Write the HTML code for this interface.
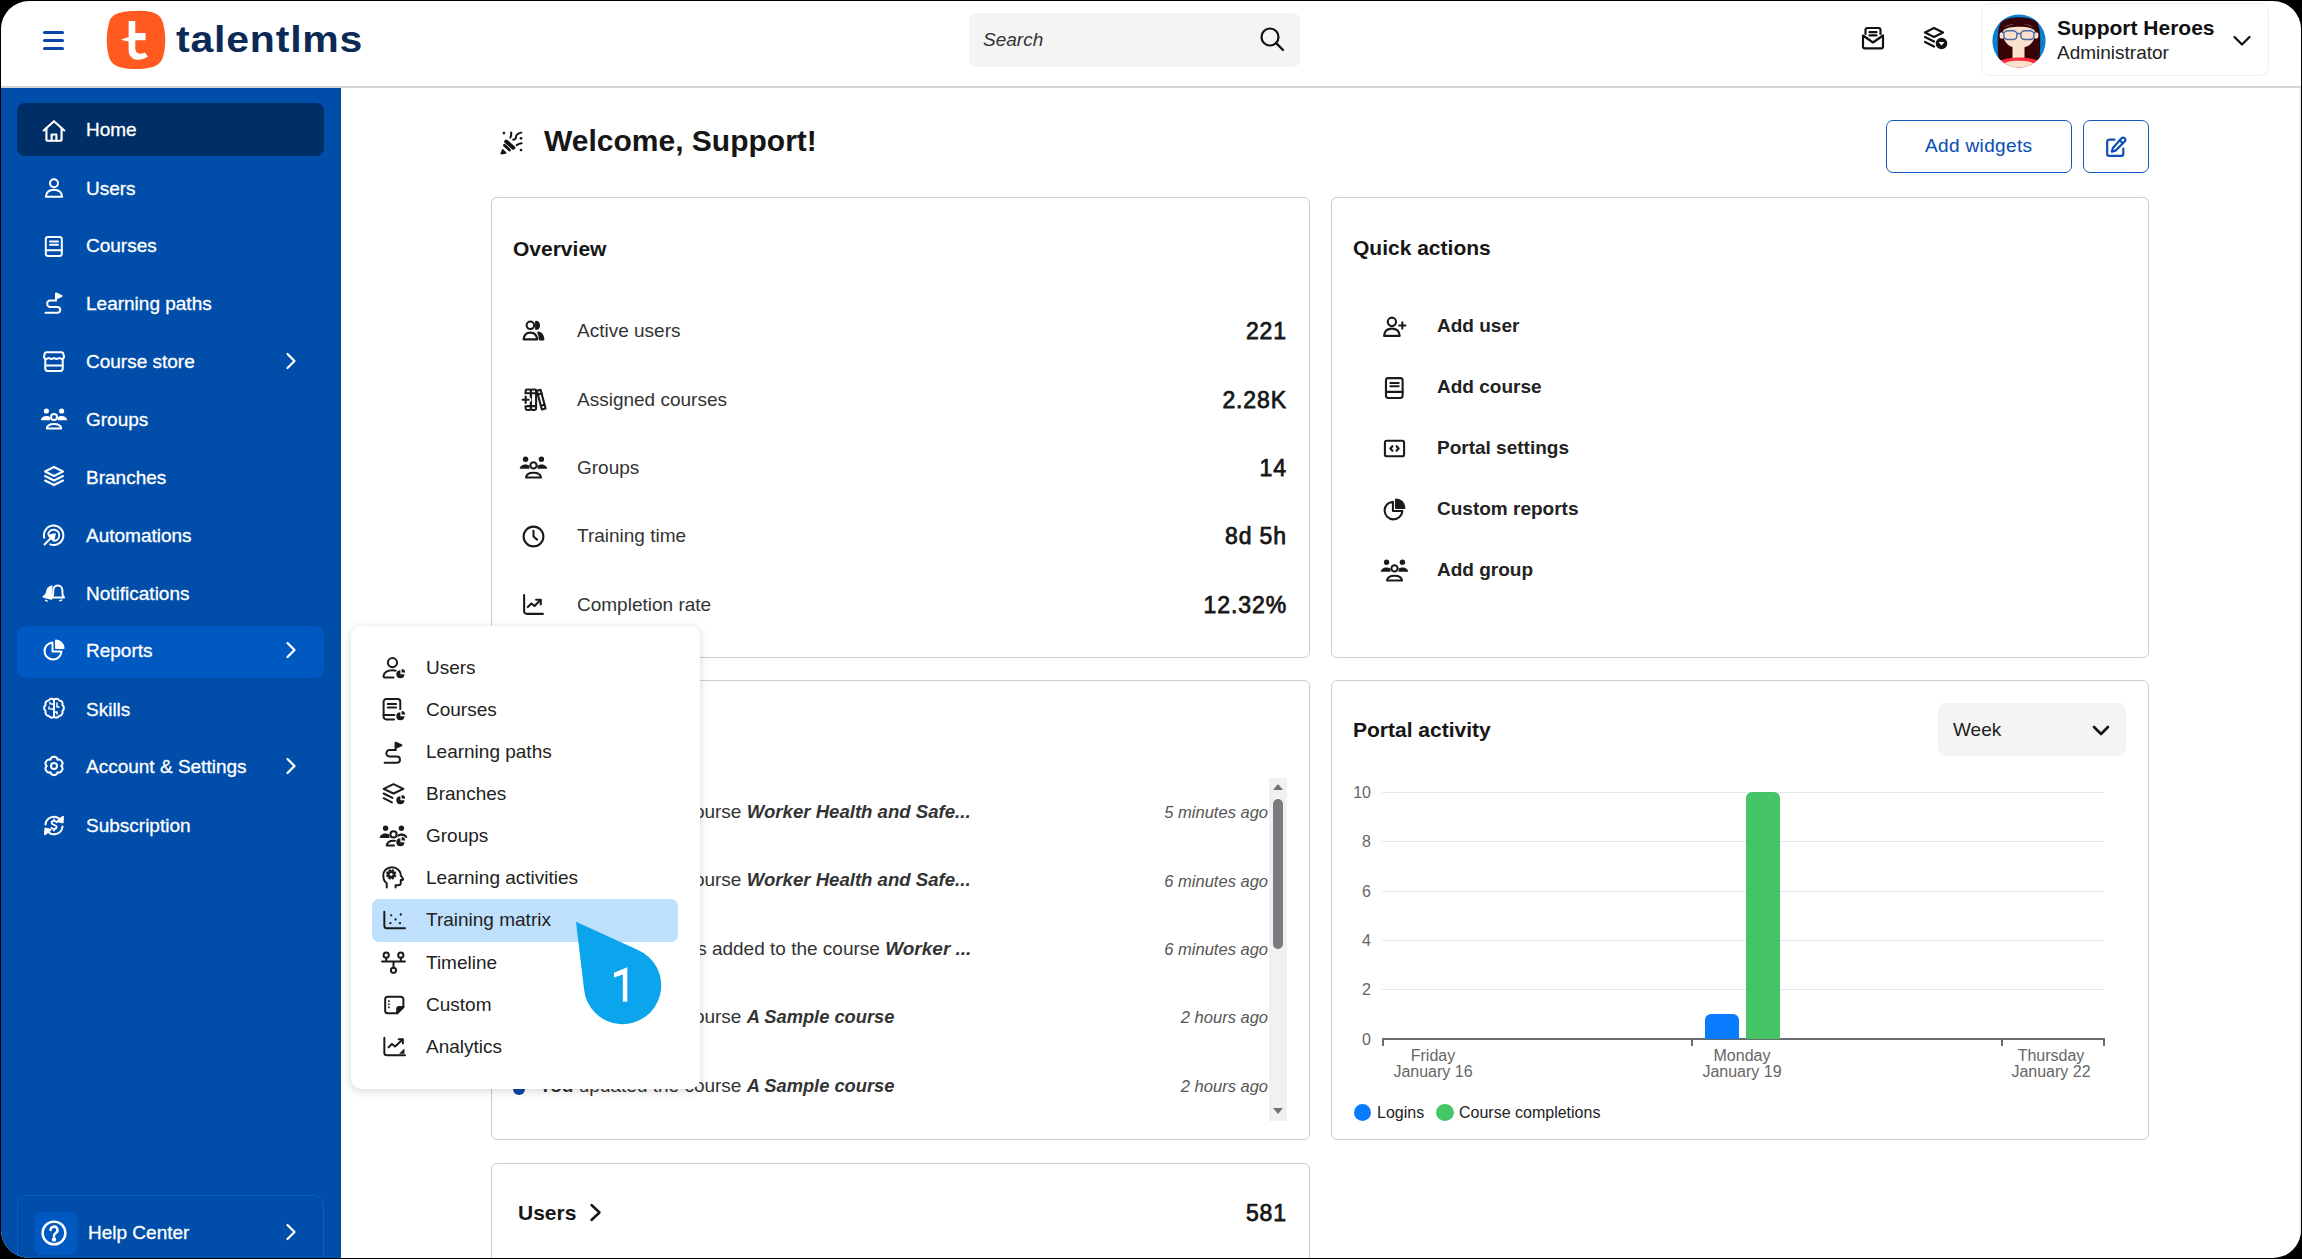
<!DOCTYPE html>
<html><head><meta charset="utf-8"><title>TalentLMS</title>
<style>
html,body{margin:0;padding:0;background:#000;width:2302px;height:1259px;overflow:hidden}
#frame{position:absolute;left:1px;top:1px;width:2300px;height:1257px;border-radius:28px;overflow:hidden;background:#fff}
#page{position:absolute;left:-1px;top:-1px;width:2302px;height:1259px}
.t{position:absolute;white-space:nowrap;font-family:'Liberation Sans', sans-serif}
svg{display:block;overflow:visible}
</style></head><body>
<div id="frame"><div id="page">
<div style="position:absolute;left:43px;top:31px;width:21px;height:3px;background:#0a47a8;border-radius:2px"></div>
<div style="position:absolute;left:43px;top:39px;width:21px;height:3px;background:#0a47a8;border-radius:2px"></div>
<div style="position:absolute;left:43px;top:47px;width:21px;height:3px;background:#0a47a8;border-radius:2px"></div>
<svg style="position:absolute;left:105px;top:9px;" width="62" height="62" viewBox="0 0 62 62"><path d="M31 2 C45 1 56 4 58 14 C61 24 61 38 58 48 C55 58 45 60 31 60 C17 60 7 58 4 48 C1 38 1 24 4 14 C6 4 17 2 31 2 Z" fill="#ff5a1f"/><path d="M23.6 12 L30.3 12 L30.3 24 L40.6 24 L40.6 31.3 L30.3 31.3 L30.3 39 C30.3 44.5 34 46 40 43.5 L42.8 47.8 C34 53.5 23.6 51 23.6 41 L23.6 32.6 C21.2 32.2 18.6 31.6 16 30.8 C18.5 29.6 21 28.8 23.6 28.2 Z" fill="#fff"/></svg>
<div class="t" style="left:176px;top:18.3px;font-size:41px;line-height:41px;font-weight:700;color:#0b2a55;font-style:normal;letter-spacing:0.8px;transform:scaleY(0.9);transform-origin:0 34.7px">talentlms</div>
<div style="position:absolute;left:969px;top:13px;width:331px;height:54px;background:#f4f4f5;border-radius:7px"></div>
<div class="t" style="left:983px;top:29.9px;font-size:19px;line-height:19px;font-weight:400;color:#333;font-style:italic;">Search</div>
<svg style="position:absolute;left:1258px;top:26px;" width="30" height="28" viewBox="0 0 30 28"><circle cx="12" cy="11" r="8.5" fill="none" stroke="#111" stroke-width="2.2"/><line x1="18.2" y1="17.2" x2="25" y2="24" stroke="#111" stroke-width="2.4" stroke-linecap="round"/></svg>
<div style="position:absolute;left:0px;top:86px;width:2302px;height:2px;background:#d3d7da"></div>
<svg style="position:absolute;left:1860px;top:25px;" width="26" height="26" viewBox="0 0 26 26"><g fill="none" stroke="#111" stroke-width="2.2" stroke-linejoin="round" stroke-linecap="round"><path d="M5.5 9 V5 a2 2 0 0 1 2-2 h11 a2 2 0 0 1 2 2 V9"/><path d="M9.5 7.2 h7 M9.5 10.4 h7"/><path d="M3 10.5 L13 17.5 L23 10.5 V21.5 a1.8 1.8 0 0 1 -1.8 1.8 H4.8 a1.8 1.8 0 0 1 -1.8 -1.8 Z"/></g></svg>
<svg style="position:absolute;left:1921px;top:25px;" width="28" height="26" viewBox="0 0 28 26"><g fill="none" stroke="#111" stroke-width="2.2" stroke-linejoin="round" stroke-linecap="round"><path d="M4 7.5 L13 3 L22 7.5 L13 12 Z"/><path d="M4 12 L13 16.5"/><path d="M4 17 L13 21.5"/></g><circle cx="20.5" cy="18.5" r="5.8" fill="#111"/><path d="M17.5 17 h6 l-3 3.6 z" fill="#fff"/></svg>
<div style="position:absolute;left:1981px;top:3px;width:288px;height:73px;border:1px solid #eeeff0;border-radius:9px;box-sizing:border-box"></div>
<svg style="position:absolute;left:1992px;top:14px;" width="54" height="54" viewBox="0 0 54 54"><defs><clipPath id="av"><circle cx="27" cy="27" r="26.6"/></clipPath></defs><g clip-path="url(#av)"><rect width="54" height="54" fill="#0b7fd4"/><path d="M6.5 46 C5.5 30 5 18 8 10 C11 1 43 1 46 10 C49 18 48.5 30 47.5 46 Z" fill="#360306"/><ellipse cx="9.8" cy="21.5" rx="2.2" ry="3.2" fill="#fbe0cc"/><ellipse cx="44.2" cy="21.5" rx="2.2" ry="3.2" fill="#fbe0cc"/><path d="M11 19 C11 11 18 10 27 10 C36 10 43 11 43 19 C43 30 35 34 27 34 C19 34 11 30 11 19 Z" fill="#fbe0cc"/><path d="M10 17.5 C12 7 42 7 44 17.5 C40 13.5 34 12.8 27 12.8 C20 12.8 14 13.5 10 17.5 Z" fill="#360306"/><rect x="20.5" y="31" width="12" height="14" fill="#fbe0cc"/><path d="M0 54 C3 47 13 43.5 27 43.5 C41 43.5 51 47 54 54 Z" fill="#ff2a3c"/><path d="M8 54 C10 48.5 17 46.8 27 46.8 C37 46.8 44 48.5 46 54 Z" fill="#fbe0cc"/><g fill="none" stroke="#4a6aa8" stroke-width="1.5"><rect x="11.8" y="16.8" width="13.2" height="8.8" rx="4"/><rect x="28.8" y="16.8" width="13.2" height="8.8" rx="4"/><path d="M25 19.5 h3.8 M11.8 19 l-1.8 -1 M42 19 l1.8 -1"/></g></g></svg>
<div class="t" style="left:2057px;top:17.2px;font-size:21px;line-height:21px;font-weight:700;color:#111;font-style:normal;">Support Heroes</div>
<div class="t" style="left:2057px;top:42.9px;font-size:19px;line-height:19px;font-weight:400;color:#222;font-style:normal;">Administrator</div>
<svg style="position:absolute;left:2232px;top:34px;" width="20" height="14" viewBox="0 0 20 14"><path d="M2.5 3 L10 10.5 L17.5 3" fill="none" stroke="#111" stroke-width="2.2" stroke-linecap="round" stroke-linejoin="round"/></svg>
<div style="position:absolute;left:0px;top:88px;width:341px;height:1171px;background:#004ea9"></div>
<div style="position:absolute;left:17px;top:103px;width:307px;height:53px;background:#002e66;border-radius:8px"></div>
<div style="position:absolute;left:17px;top:626px;width:307px;height:52px;background:#0058c1;border-radius:8px"></div>
<svg style="position:absolute;left:41px;top:118px;" width="26" height="26" viewBox="0 0 24 24"><g fill="none" stroke="#fff" color="#fff" stroke-width="2" stroke-linecap="round" stroke-linejoin="round"><path d="M2.5 11.5 L12 3 L21.5 11.5"/><path d="M5 9.5 V19.5 a1.5 1.5 0 0 0 1.5 1.5 H17.5 a1.5 1.5 0 0 0 1.5 -1.5 V9.5"/><path d="M9.8 21 V15.2 h4.4 V21"/></g></svg>
<div class="t" style="left:86px;top:119.9px;font-size:19px;line-height:19px;font-weight:400;color:#fff;font-style:normal;-webkit-text-stroke:0.3px #fff">Home</div>
<svg style="position:absolute;left:42px;top:176px;" width="24" height="24" viewBox="0 0 24 24"><g fill="none" stroke="#fff" color="#fff" stroke-width="2" stroke-linecap="round" stroke-linejoin="round"><circle cx="12" cy="7.2" r="4"/><path d="M3.8 20.8 C4.3 15.8 7.8 13.8 12 13.8 C16.2 13.8 19.7 15.8 20.2 20.8 Z"/></g></svg>
<div class="t" style="left:86px;top:178.9px;font-size:19px;line-height:19px;font-weight:400;color:#fff;font-style:normal;-webkit-text-stroke:0.3px #fff">Users</div>
<svg style="position:absolute;left:42px;top:234px;" width="24" height="24" viewBox="0 0 24 24"><g fill="none" stroke="#fff" color="#fff" stroke-width="2" stroke-linecap="round" stroke-linejoin="round"><rect x="3.8" y="3" width="16" height="19" rx="2.3"/><path d="M3.8 16.2 H19.8"/><path d="M8 7.6 h8 M8 10.8 h8"/></g></svg>
<div class="t" style="left:86px;top:235.9px;font-size:19px;line-height:19px;font-weight:400;color:#fff;font-style:normal;-webkit-text-stroke:0.3px #fff">Courses</div>
<svg style="position:absolute;left:42px;top:290px;" width="24" height="24" viewBox="0 0 24 24"><g fill="none" stroke="#fff" color="#fff" stroke-width="2" stroke-linecap="round" stroke-linejoin="round"><path d="M14 10.5 H8.3 a3.2 3.2 0 0 0 0 6.4 H15.3 a2.9 2.9 0 0 1 0 5.8 H3.5"/><path d="M14 10.5 V3.5 L19.5 6 L14 8.5 Z" fill="currentColor"/></g></svg>
<div class="t" style="left:86px;top:293.9px;font-size:19px;line-height:19px;font-weight:400;color:#fff;font-style:normal;-webkit-text-stroke:0.3px #fff">Learning paths</div>
<svg style="position:absolute;left:42px;top:349px;" width="24" height="24" viewBox="0 0 24 24"><g fill="none" stroke="#fff" color="#fff" stroke-width="2" stroke-linecap="round" stroke-linejoin="round"><path d="M4.3 3.3 H19.7 a1.6 1.6 0 0 1 1.5 1.1 L22 7.6 c0 1.4 -0.9 2.3 -2.1 2.3 c-1.3 0 -1.9 -0.9 -2.6 -0.9 c-0.7 0 -1.3 0.9 -2.7 0.9 c-1.4 0 -2 -0.9 -2.6 -0.9 c-0.6 0 -1.2 0.9 -2.6 0.9 c-1.4 0 -2 -0.9 -2.7 -0.9 c-0.7 0 -1.3 0.9 -2.6 0.9 c-1.2 0 -2.1 -0.9 -2.1 -2.3 L2.8 4.4 a1.6 1.6 0 0 1 1.5 -1.1 Z"/><path d="M3.3 10.5 V19.5 a2.5 2.5 0 0 0 2.5 2.5 H18.2 a2.5 2.5 0 0 0 2.5 -2.5 V10.5"/><path d="M3.3 16.6 H20.7"/></g></svg>
<div class="t" style="left:86px;top:351.9px;font-size:19px;line-height:19px;font-weight:400;color:#fff;font-style:normal;-webkit-text-stroke:0.3px #fff">Course store</div>
<svg style="position:absolute;left:285px;top:352px;" width="12" height="18" viewBox="0 0 12 18"><path d="M2.5 2 L9.5 9.0 L2.5 16" fill="none" stroke="#fff" stroke-width="2.2" stroke-linecap="round" stroke-linejoin="round"/></svg>
<svg style="position:absolute;left:42px;top:407px;" width="24" height="24" viewBox="0 0 24 24"><g fill="none" stroke="#fff" color="#fff" stroke-width="2" stroke-linecap="round" stroke-linejoin="round"><circle cx="12" cy="10" r="3"/><path d="M4.8 21.6 c0.3 -3 3 -4.6 7.2 -4.6 s6.9 1.6 7.2 4.6 Z"/><circle cx="4.4" cy="4" r="2.6" fill="currentColor" stroke="none"/><circle cx="19.6" cy="4" r="2.6" fill="currentColor" stroke="none"/><path d="M-1.2 13.3 C-1 10.6 1.3 9 4.3 9 C6 9 7.3 9.5 8.2 10.4 C7.9 11.3 8 12.4 8.3 13.3 Z" fill="currentColor" stroke="none"/><path d="M25.2 13.3 C25 10.6 22.7 9 19.7 9 C18 9 16.7 9.5 15.8 10.4 C16.1 11.3 16 12.4 15.7 13.3 Z" fill="currentColor" stroke="none"/></g></svg>
<div class="t" style="left:86px;top:409.9px;font-size:19px;line-height:19px;font-weight:400;color:#fff;font-style:normal;-webkit-text-stroke:0.3px #fff">Groups</div>
<svg style="position:absolute;left:42px;top:464px;" width="24" height="24" viewBox="0 0 24 24"><g fill="none" stroke="#fff" color="#fff" stroke-width="2" stroke-linecap="round" stroke-linejoin="round"><path d="M3 7.5 L12 3 L21 7.5 L12 12 Z"/><path d="M3 12 L12 16.5 L21 12"/><path d="M3 16.5 L12 21 L21 16.5"/></g></svg>
<div class="t" style="left:86px;top:467.9px;font-size:19px;line-height:19px;font-weight:400;color:#fff;font-style:normal;-webkit-text-stroke:0.3px #fff">Branches</div>
<svg style="position:absolute;left:42px;top:523px;" width="24" height="24" viewBox="0 0 24 24"><g fill="none" stroke="#fff" color="#fff" stroke-width="2" stroke-linecap="round" stroke-linejoin="round"><path d="M2.3 14.8 A9.7 9.7 0 1 1 8.3 21.4"/><path d="M6.2 11 A5.6 5.6 0 1 1 12.5 17.8"/><path d="M2.5 21.5 L9.5 14.5"/><path d="M12.8 11.2 L6.8 12.6 L11.4 17.2 Z" fill="currentColor"/></g></svg>
<div class="t" style="left:86px;top:525.9px;font-size:19px;line-height:19px;font-weight:400;color:#fff;font-style:normal;-webkit-text-stroke:0.3px #fff">Automations</div>
<svg style="position:absolute;left:42px;top:580px;" width="24" height="24" viewBox="0 0 24 24"><g fill="none" stroke="#fff" color="#fff" stroke-width="2" stroke-linecap="round" stroke-linejoin="round"><path d="M9.6 6.5 C6.8 7.2 5.2 9.6 5 12.2 C4.8 14.3 3.6 15.7 1.6 16.7 L9.4 18.7 C8.8 14.5 8.5 10 9.6 6.5 Z" fill="currentColor"/><path d="M15.8 5.5 C12.8 5.5 11.2 8 11.2 10.8 V13.8 C11.2 15.3 10.3 16.5 9.6 17.4 H22 C21.3 16.5 20.4 15.3 20.4 13.8 V10.8 C20.4 8 18.8 5.5 15.8 5.5 Z"/><path d="M3.6 20.3 l1.6 0.8 M17.6 20.8 l2.2 -0.8" stroke-width="1.4"/></g></svg>
<div class="t" style="left:86px;top:583.9px;font-size:19px;line-height:19px;font-weight:400;color:#fff;font-style:normal;-webkit-text-stroke:0.3px #fff">Notifications</div>
<svg style="position:absolute;left:42px;top:638px;" width="24" height="24" viewBox="0 0 24 24"><g fill="none" stroke="#fff" color="#fff" stroke-width="2" stroke-linecap="round" stroke-linejoin="round"><path d="M10.5 4.5 A8.5 8.5 0 1 0 19.5 13.5 H10.5 Z"/><path d="M14 2.5 A8 8 0 0 1 21.5 10 H14 Z" fill="currentColor"/></g></svg>
<div class="t" style="left:86px;top:640.9px;font-size:19px;line-height:19px;font-weight:400;color:#fff;font-style:normal;-webkit-text-stroke:0.3px #fff">Reports</div>
<svg style="position:absolute;left:285px;top:641px;" width="12" height="18" viewBox="0 0 12 18"><path d="M2.5 2 L9.5 9.0 L2.5 16" fill="none" stroke="#fff" stroke-width="2.2" stroke-linecap="round" stroke-linejoin="round"/></svg>
<svg style="position:absolute;left:42px;top:696px;" width="24" height="24" viewBox="0 0 24 24"><g fill="none" stroke="#fff" color="#fff" stroke-width="2" stroke-linecap="round" stroke-linejoin="round"><path d="M12 3.8 C10.6 2.3 7.8 2.4 6.8 4.4 C4.3 4.4 2.8 6.8 3.6 8.9 C1.6 10.3 1.6 13.6 3.6 15 C2.9 17.6 4.6 20 7 20 C8 21.9 10.8 22.2 12 20.6 Z"/><path d="M12 3.8 C13.4 2.3 16.2 2.4 17.2 4.4 C19.7 4.4 21.2 6.8 20.4 8.9 C22.4 10.3 22.4 13.6 20.4 15 C21.1 17.6 19.4 20 17 20 C16 21.9 13.2 22.2 12 20.6 Z"/><path d="M12 8 H9.5 M8 6.5 v1.5 M12 13 H8.5 M7 11 v2 M15 7 v4 h2 M12 16 h3 v2" stroke-width="1.5"/></g></svg>
<div class="t" style="left:86px;top:699.9px;font-size:19px;line-height:19px;font-weight:400;color:#fff;font-style:normal;-webkit-text-stroke:0.3px #fff">Skills</div>
<svg style="position:absolute;left:42px;top:754px;" width="24" height="24" viewBox="0 0 24 24"><g fill="none" stroke="#fff" color="#fff" stroke-width="2" stroke-linecap="round" stroke-linejoin="round"><circle cx="12" cy="12" r="3"/><path d="M8.40 5.76 C8.90 1.86 15.10 1.86 15.60 5.76 C19.23 4.25 22.33 9.62 19.20 12.00 C22.33 14.38 19.23 19.75 15.60 18.24 C15.10 22.14 8.90 22.14 8.40 18.24 C4.77 19.75 1.67 14.38 4.80 12.00 C1.67 9.62 4.77 4.25 8.40 5.76 Z"/></g></svg>
<div class="t" style="left:86px;top:756.9px;font-size:19px;line-height:19px;font-weight:400;color:#fff;font-style:normal;-webkit-text-stroke:0.3px #fff">Account &amp; Settings</div>
<svg style="position:absolute;left:285px;top:757px;" width="12" height="18" viewBox="0 0 12 18"><path d="M2.5 2 L9.5 9.0 L2.5 16" fill="none" stroke="#fff" stroke-width="2.2" stroke-linecap="round" stroke-linejoin="round"/></svg>
<svg style="position:absolute;left:42px;top:813px;" width="24" height="24" viewBox="0 0 24 24"><g fill="none" stroke="#fff" color="#fff" stroke-width="2" stroke-linecap="round" stroke-linejoin="round"><path d="M3.5 11.5 A8.5 8.5 0 0 1 18.5 6.8"/><path d="M20.5 13.5 A8.5 8.5 0 0 1 5.5 18.2"/><path d="M21 3.8 L20.6 9.4 L15.4 8.2 Z" fill="currentColor"/><path d="M3 21.2 L3.4 15.6 L8.6 16.8 Z" fill="currentColor"/><path d="M14.6 9.3 c-0.5 -0.9 -1.5 -1.4 -2.6 -1.4 c-1.4 0 -2.4 0.8 -2.4 1.9 c0 2.6 5 1.6 5 4.3 c0 1.1 -1 1.9 -2.5 1.9 c-1.1 0 -2.1 -0.5 -2.6 -1.3 M12 6.5 V7.9 M12 16 V17.5" stroke-width="1.8"/></g></svg>
<div class="t" style="left:86px;top:815.9px;font-size:19px;line-height:19px;font-weight:400;color:#fff;font-style:normal;-webkit-text-stroke:0.3px #fff">Subscription</div>
<div style="position:absolute;left:17px;top:1195px;width:307px;height:80px;border:1px solid #0c5ec6;border-radius:10px;box-sizing:border-box"></div>
<div style="position:absolute;left:34px;top:1212px;width:43px;height:43px;background:#0058c1;border-radius:7px"></div>
<svg style="position:absolute;left:41px;top:1220px;" width="26" height="26" viewBox="0 0 24 24"><g fill="none" stroke="#fff" color="#fff" stroke-width="2.3" stroke-linecap="round" stroke-linejoin="round"><circle cx="12" cy="12" r="10.5"/><path d="M8.8 9.3 a3.2 3.2 0 1 1 4.6 2.9 c-0.9 0.5 -1.4 1 -1.4 2.1 v0.6"/><circle cx="12" cy="18" r="0.9" fill="currentColor"/></g></svg>
<div class="t" style="left:88px;top:1222.9px;font-size:19px;line-height:19px;font-weight:400;color:#fff;font-style:normal;-webkit-text-stroke:0.3px #fff">Help Center</div>
<svg style="position:absolute;left:285px;top:1223px;" width="12" height="18" viewBox="0 0 12 18"><path d="M2.5 2 L9.5 9.0 L2.5 16" fill="none" stroke="#fff" stroke-width="2.2" stroke-linecap="round" stroke-linejoin="round"/></svg>
<svg style="position:absolute;left:499px;top:130px;" width="25" height="25" viewBox="0 0 25 25"><g fill="none" stroke="#111" stroke-linecap="round" stroke-linejoin="round"><circle cx="4.9" cy="3.1" r="1.3" fill="#111" stroke="none"/><circle cx="22" cy="8.3" r="1.35" fill="#111" stroke="none"/><circle cx="22" cy="20" r="1.35" fill="#111" stroke="none"/><path d="M11.4 7.6 Q12.6 5 12.2 2.4" stroke-width="2"/><path d="M14.2 9.7 C16.2 9.5 17 8.6 17 7 C17 5 18.5 3.5 22.4 2.6" stroke-width="1.9"/><path d="M17.7 15.1 C19 14.2 20.5 13.5 22.6 13.3" stroke-width="2"/><path d="M7.2 11.6 L14.3 17.7" stroke-width="4"/><path d="M5.4 15.3 L10.5 20" stroke-width="2.7"/><path d="M3.6 19.9 L6.6 22.9 L2.3 23.6 Z" fill="#111" stroke-width="1.6"/></g></svg>
<div class="t" style="left:544px;top:125.6px;font-size:30px;line-height:30px;font-weight:700;color:#161616;font-style:normal;">Welcome, Support!</div>
<div style="position:absolute;left:1886px;top:120px;width:186px;height:53px;border:1.6px solid #1558b8;border-radius:7px;box-sizing:border-box"></div>
<div class="t" style="left:1925px;top:135.9px;font-size:19px;line-height:19px;font-weight:400;color:#0c51b3;font-style:normal;letter-spacing:0.35px;-webkit-text-stroke:0.1px #0c51b3">Add widgets</div>
<div style="position:absolute;left:2083px;top:120px;width:66px;height:53px;border:1.6px solid #1558b8;border-radius:7px;box-sizing:border-box"></div>
<svg style="position:absolute;left:2103px;top:135px;" width="25" height="25" viewBox="0 0 24 24"><g fill="none" stroke="#0c51b3" color="#0c51b3" stroke-width="2.1" stroke-linecap="round" stroke-linejoin="round"><path d="M11 4.5 H6 a2 2 0 0 0 -2 2 V18 a2 2 0 0 0 2 2 H17.5 a2 2 0 0 0 2 -2 V13"/><path d="M17.8 3.2 a2.1 2.1 0 0 1 3 3 L12 15 L8.5 16 L9.5 12.5 Z"/><path d="M16 5 L19 8"/></g></svg>
<div style="position:absolute;left:491px;top:197px;width:819px;height:461px;border:1.5px solid #c9cdd1;border-radius:6px;box-sizing:border-box;background:#fff"></div>
<div class="t" style="left:513px;top:238.2px;font-size:21px;line-height:21px;font-weight:700;color:#161616;font-style:normal;">Overview</div>
<svg style="position:absolute;left:521px;top:318px;" width="25" height="25" viewBox="0 0 24 24"><g fill="none" stroke="#1a1a1a" color="#1a1a1a" stroke-width="2" stroke-linecap="round" stroke-linejoin="round"><circle cx="9" cy="7" r="3.6"/><path d="M2.5 20.5 c0.4 -4.5 3 -6.5 6.5 -6.5 s6.1 2 6.5 6.5 Z"/><path d="M14.5 3.6 a3.6 3.6 0 0 1 0 7 Z" fill="currentColor"/><path d="M16.5 14 c3 0.5 4.6 2.5 5 6.5 h-3.5 c0 -2.5 -0.5 -4.8 -1.5 -6.5 Z" fill="currentColor"/></g></svg>
<div class="t" style="left:577px;top:320.9px;font-size:19px;line-height:19px;font-weight:400;color:#333;font-style:normal;">Active users</div>
<div class="t" style="right:1015px;top:319.5px;font-size:23px;line-height:23px;font-weight:400;color:#161616;font-style:normal;letter-spacing:0.9px;-webkit-text-stroke:0.75px #161616">221</div>
<svg style="position:absolute;left:521px;top:386px;" width="25" height="25" viewBox="0 0 24 24"><g fill="none" stroke="#1a1a1a" color="#1a1a1a" stroke-width="2" stroke-linecap="round" stroke-linejoin="round"><rect x="4.5" y="3.3" width="5" height="19.7" rx="1.3"/><rect x="9.5" y="3.3" width="5" height="19.7" rx="1.3"/><path d="M4.5 7 h10 M4.5 19.3 h10"/><path d="M15.2 4.6 L18.8 3.6 L23.6 21.6 L20 22.6 Z"/><path d="M16.2 8.2 l3.6 -1 M19 19 l3.6 -1"/><path d="M1.2 13.2 h6.6 M4.5 9.9 v6.6" stroke="#fff" stroke-width="4.5"/><path d="M1.5 13.2 h6 M4.5 10.2 v6"/></g></svg>
<div class="t" style="left:577px;top:389.9px;font-size:19px;line-height:19px;font-weight:400;color:#333;font-style:normal;">Assigned courses</div>
<div class="t" style="right:1015px;top:388.5px;font-size:23px;line-height:23px;font-weight:400;color:#161616;font-style:normal;letter-spacing:0.9px;-webkit-text-stroke:0.75px #161616">2.28K</div>
<svg style="position:absolute;left:521px;top:455px;" width="25" height="25" viewBox="0 0 24 24"><g fill="none" stroke="#1a1a1a" color="#1a1a1a" stroke-width="2" stroke-linecap="round" stroke-linejoin="round"><circle cx="12" cy="10" r="3"/><path d="M4.8 21.6 c0.3 -3 3 -4.6 7.2 -4.6 s6.9 1.6 7.2 4.6 Z"/><circle cx="4.4" cy="4" r="2.6" fill="currentColor" stroke="none"/><circle cx="19.6" cy="4" r="2.6" fill="currentColor" stroke="none"/><path d="M-1.2 13.3 C-1 10.6 1.3 9 4.3 9 C6 9 7.3 9.5 8.2 10.4 C7.9 11.3 8 12.4 8.3 13.3 Z" fill="currentColor" stroke="none"/><path d="M25.2 13.3 C25 10.6 22.7 9 19.7 9 C18 9 16.7 9.5 15.8 10.4 C16.1 11.3 16 12.4 15.7 13.3 Z" fill="currentColor" stroke="none"/></g></svg>
<div class="t" style="left:577px;top:457.9px;font-size:19px;line-height:19px;font-weight:400;color:#333;font-style:normal;">Groups</div>
<div class="t" style="right:1015px;top:456.5px;font-size:23px;line-height:23px;font-weight:400;color:#161616;font-style:normal;letter-spacing:0.9px;-webkit-text-stroke:0.75px #161616">14</div>
<svg style="position:absolute;left:521px;top:524px;" width="25" height="25" viewBox="0 0 24 24"><g fill="none" stroke="#1a1a1a" color="#1a1a1a" stroke-width="2" stroke-linecap="round" stroke-linejoin="round"><circle cx="12" cy="12" r="9.5"/><path d="M12 6.5 V12 L15.5 15"/></g></svg>
<div class="t" style="left:577px;top:525.9px;font-size:19px;line-height:19px;font-weight:400;color:#333;font-style:normal;">Training time</div>
<div class="t" style="right:1015px;top:524.5px;font-size:23px;line-height:23px;font-weight:400;color:#161616;font-style:normal;letter-spacing:0.9px;-webkit-text-stroke:0.75px #161616">8d 5h</div>
<svg style="position:absolute;left:521px;top:592px;" width="25" height="25" viewBox="0 0 24 24"><g fill="none" stroke="#1a1a1a" color="#1a1a1a" stroke-width="2" stroke-linecap="round" stroke-linejoin="round"><path d="M3 3 V18.5 a2.5 2.5 0 0 0 2.5 2.5 H21"/><path d="M6.5 14.5 L10 11 L13 13.5 L18.5 8"/><path d="M14.5 7.5 h4.5 v4.5"/></g></svg>
<div class="t" style="left:577px;top:594.9px;font-size:19px;line-height:19px;font-weight:400;color:#333;font-style:normal;">Completion rate</div>
<div class="t" style="right:1015px;top:593.5px;font-size:23px;line-height:23px;font-weight:400;color:#161616;font-style:normal;letter-spacing:0.9px;-webkit-text-stroke:0.75px #161616">12.32%</div>
<div style="position:absolute;left:1331px;top:197px;width:818px;height:461px;border:1.5px solid #c9cdd1;border-radius:6px;box-sizing:border-box;background:#fff"></div>
<div class="t" style="left:1353px;top:237.2px;font-size:21px;line-height:21px;font-weight:700;color:#161616;font-style:normal;">Quick actions</div>
<svg style="position:absolute;left:1382px;top:314px;" width="25" height="25" viewBox="0 0 24 24"><g fill="none" stroke="#1a1a1a" color="#1a1a1a" stroke-width="2" stroke-linecap="round" stroke-linejoin="round"><circle cx="9.5" cy="7.5" r="4"/><path d="M2 21 c0.4 -4.8 3.3 -7 7.5 -7 s7.1 2.2 7.5 7 Z"/><path d="M19.5 8 v6 M16.5 11 h6"/></g></svg>
<div class="t" style="left:1437px;top:315.9px;font-size:19px;line-height:19px;font-weight:700;color:#222;font-style:normal;">Add user</div>
<svg style="position:absolute;left:1382px;top:375px;" width="25" height="25" viewBox="0 0 24 24"><g fill="none" stroke="#1a1a1a" color="#1a1a1a" stroke-width="2" stroke-linecap="round" stroke-linejoin="round"><rect x="3.8" y="3" width="16" height="19" rx="2.3"/><path d="M3.8 16.2 H19.8"/><path d="M8 7.6 h8 M8 10.8 h8"/></g></svg>
<div class="t" style="left:1437px;top:376.9px;font-size:19px;line-height:19px;font-weight:700;color:#222;font-style:normal;">Add course</div>
<svg style="position:absolute;left:1382px;top:436px;" width="25" height="25" viewBox="0 0 24 24"><g fill="none" stroke="#1a1a1a" color="#1a1a1a" stroke-width="2" stroke-linecap="round" stroke-linejoin="round"><rect x="2.8" y="4.5" width="18.4" height="15" rx="1.8"/><path d="M10 9.8 L8 12 L10 14.2 M14 9.8 L16 12 L14 14.2"/></g></svg>
<div class="t" style="left:1437px;top:437.9px;font-size:19px;line-height:19px;font-weight:700;color:#222;font-style:normal;">Portal settings</div>
<svg style="position:absolute;left:1382px;top:497px;" width="25" height="25" viewBox="0 0 24 24"><g fill="none" stroke="#1a1a1a" color="#1a1a1a" stroke-width="2" stroke-linecap="round" stroke-linejoin="round"><path d="M10.5 4.5 A8.5 8.5 0 1 0 19.5 13.5 H10.5 Z"/><path d="M13.5 2.5 A8 8 0 0 1 21.5 10.5 H13.5 Z" fill="currentColor"/></g></svg>
<div class="t" style="left:1437px;top:498.9px;font-size:19px;line-height:19px;font-weight:700;color:#222;font-style:normal;">Custom reports</div>
<svg style="position:absolute;left:1382px;top:558px;" width="25" height="25" viewBox="0 0 24 24"><g fill="none" stroke="#1a1a1a" color="#1a1a1a" stroke-width="2" stroke-linecap="round" stroke-linejoin="round"><circle cx="12" cy="10" r="3"/><path d="M4.8 21.6 c0.3 -3 3 -4.6 7.2 -4.6 s6.9 1.6 7.2 4.6 Z"/><circle cx="4.4" cy="4" r="2.6" fill="currentColor" stroke="none"/><circle cx="19.6" cy="4" r="2.6" fill="currentColor" stroke="none"/><path d="M-1.2 13.3 C-1 10.6 1.3 9 4.3 9 C6 9 7.3 9.5 8.2 10.4 C7.9 11.3 8 12.4 8.3 13.3 Z" fill="currentColor" stroke="none"/><path d="M25.2 13.3 C25 10.6 22.7 9 19.7 9 C18 9 16.7 9.5 15.8 10.4 C16.1 11.3 16 12.4 15.7 13.3 Z" fill="currentColor" stroke="none"/></g></svg>
<div class="t" style="left:1437px;top:559.9px;font-size:19px;line-height:19px;font-weight:700;color:#222;font-style:normal;">Add group</div>
<div style="position:absolute;left:491px;top:680px;width:819px;height:460px;border:1.5px solid #c9cdd1;border-radius:6px;box-sizing:border-box;background:#fff"></div>
<div class="t" style="left:513px;top:719.2px;font-size:21px;line-height:21px;font-weight:700;color:#161616;font-style:normal;">Activity</div>
<div style="position:absolute;left:491px;top:777px;width:780px;height:343px;overflow:hidden">
<div style="position:absolute;left:22px;top:31.9px;width:12px;height:12px;border-radius:50%;background:#0a47a8"></div>
<div class="t" style="left:48px;top:24.9px;font-size:19px;line-height:19px;color:#333"><b>You</b> updated the course <b><i style="font-size:18.6px">Worker Health and Safe...</i></b></div>
<div class="t" style="right:3px;top:26.1px;font-size:16.5px;line-height:19px;color:#555;font-style:italic">5 minutes ago</div>
<div style="position:absolute;left:22px;top:100.3px;width:12px;height:12px;border-radius:50%;background:#0a47a8"></div>
<div class="t" style="left:48px;top:93.3px;font-size:19px;line-height:19px;color:#333"><b>You</b> updated the course <b><i style="font-size:18.6px">Worker Health and Safe...</i></b></div>
<div class="t" style="right:3px;top:94.5px;font-size:16.5px;line-height:19px;color:#555;font-style:italic">6 minutes ago</div>
<div style="position:absolute;left:22px;top:168.7px;width:12px;height:12px;border-radius:50%;background:#0a47a8"></div>
<div class="t" style="left:48px;top:161.7px;font-size:19px;line-height:19px;color:#333"><span style="margin-left:42px"></span><b>John Doe</b> was added to the course <b><i>Worker ...</i></b></div>
<div class="t" style="right:3px;top:162.9px;font-size:16.5px;line-height:19px;color:#555;font-style:italic">6 minutes ago</div>
<div style="position:absolute;left:22px;top:237.1px;width:12px;height:12px;border-radius:50%;background:#0a47a8"></div>
<div class="t" style="left:48px;top:230.1px;font-size:19px;line-height:19px;color:#333"><b>You</b> updated the course <b><i style="font-size:18.3px">A Sample course</i></b></div>
<div class="t" style="right:3px;top:231.3px;font-size:16.5px;line-height:19px;color:#555;font-style:italic">2 hours ago</div>
<div style="position:absolute;left:22px;top:305.5px;width:12px;height:12px;border-radius:50%;background:#0a47a8"></div>
<div class="t" style="left:48px;top:298.5px;font-size:19px;line-height:19px;color:#333"><b>You</b> updated the course <b><i style="font-size:18.3px">A Sample course</i></b></div>
<div class="t" style="right:3px;top:299.7px;font-size:16.5px;line-height:19px;color:#555;font-style:italic">2 hours ago</div>
</div>
<div style="position:absolute;left:1269px;top:778px;width:18px;height:343px;background:#f1f1f1"></div>
<svg style="position:absolute;left:1271px;top:782px;" width="14" height="10" viewBox="0 0 14 10"><path d="M2 8 L7 2 L12 8 Z" fill="#6f7477"/></svg>
<div style="position:absolute;left:1273px;top:799px;width:10px;height:150px;background:#787c80;border-radius:5px"></div>
<svg style="position:absolute;left:1271px;top:1106px;" width="14" height="10" viewBox="0 0 14 10"><path d="M2 2 L7 8 L12 2 Z" fill="#6f7477"/></svg>
<div style="position:absolute;left:1331px;top:680px;width:818px;height:460px;border:1.5px solid #c9cdd1;border-radius:6px;box-sizing:border-box;background:#fff"></div>
<div class="t" style="left:1353px;top:719.2px;font-size:21px;line-height:21px;font-weight:700;color:#161616;font-style:normal;">Portal activity</div>
<div style="position:absolute;left:1938px;top:703px;width:188px;height:53px;background:#f4f4f5;border-radius:7px"></div>
<div class="t" style="left:1953px;top:719.9px;font-size:19px;line-height:19px;font-weight:400;color:#222;font-style:normal;">Week</div>
<svg style="position:absolute;left:2091px;top:724px;" width="20" height="14" viewBox="0 0 20 14"><path d="M3 3 L10 10 L17 3" fill="none" stroke="#111" stroke-width="2.6" stroke-linecap="round" stroke-linejoin="round"/></svg>
<div style="position:absolute;left:1382px;top:989px;width:722px;height:1px;background:#e3e8ee"></div>
<div class="t" style="right:931px;top:981.5px;font-size:16px;line-height:16px;font-weight:400;color:#666;font-style:normal;">2</div>
<div style="position:absolute;left:1382px;top:940px;width:722px;height:1px;background:#e3e8ee"></div>
<div class="t" style="right:931px;top:932.5px;font-size:16px;line-height:16px;font-weight:400;color:#666;font-style:normal;">4</div>
<div style="position:absolute;left:1382px;top:891px;width:722px;height:1px;background:#e3e8ee"></div>
<div class="t" style="right:931px;top:883.5px;font-size:16px;line-height:16px;font-weight:400;color:#666;font-style:normal;">6</div>
<div style="position:absolute;left:1382px;top:841px;width:722px;height:1px;background:#e3e8ee"></div>
<div class="t" style="right:931px;top:833.5px;font-size:16px;line-height:16px;font-weight:400;color:#666;font-style:normal;">8</div>
<div style="position:absolute;left:1382px;top:792px;width:722px;height:1px;background:#e3e8ee"></div>
<div class="t" style="right:931px;top:784.5px;font-size:16px;line-height:16px;font-weight:400;color:#666;font-style:normal;">10</div>
<div class="t" style="right:931px;top:1031.5px;font-size:16px;line-height:16px;font-weight:400;color:#666;font-style:normal;">0</div>
<div style="position:absolute;left:1382px;top:1038px;width:722px;height:2px;background:#686d72"></div>
<div style="position:absolute;left:1382px;top:1038px;width:1.5px;height:8px;background:#686d72"></div>
<div style="position:absolute;left:1691px;top:1038px;width:1.5px;height:8px;background:#686d72"></div>
<div style="position:absolute;left:2001px;top:1038px;width:1.5px;height:8px;background:#686d72"></div>
<div style="position:absolute;left:2103px;top:1038px;width:1.5px;height:8px;background:#686d72"></div>
<div style="position:absolute;left:1705px;top:1014px;width:34px;height:25px;background:#0a7cff;border-radius:6px 6px 0 0"></div>
<div style="position:absolute;left:1746px;top:792px;width:34px;height:247px;background:#46c566;border-radius:6px 6px 0 0"></div>
<div class="t" style="left:1353px;width:160px;text-align:center;top:1047.5px;font-size:16px;line-height:16px;color:#666">Friday</div>
<div class="t" style="left:1353px;width:160px;text-align:center;top:1063.5px;font-size:16px;line-height:16px;color:#666">January 16</div>
<div class="t" style="left:1662px;width:160px;text-align:center;top:1047.5px;font-size:16px;line-height:16px;color:#666">Monday</div>
<div class="t" style="left:1662px;width:160px;text-align:center;top:1063.5px;font-size:16px;line-height:16px;color:#666">January 19</div>
<div class="t" style="left:1971px;width:160px;text-align:center;top:1047.5px;font-size:16px;line-height:16px;color:#666">Thursday</div>
<div class="t" style="left:1971px;width:160px;text-align:center;top:1063.5px;font-size:16px;line-height:16px;color:#666">January 22</div>
<div style="position:absolute;left:1354px;top:1104px;width:17px;height:17px;background:#0a7cff;border-radius:50%"></div>
<div class="t" style="left:1377px;top:1104.5px;font-size:16px;line-height:16px;font-weight:400;color:#222;font-style:normal;">Logins</div>
<div style="position:absolute;left:1436px;top:1104px;width:18px;height:17px;background:#46c566;border-radius:50%"></div>
<div class="t" style="left:1459px;top:1104.5px;font-size:16px;line-height:16px;font-weight:400;color:#222;font-style:normal;">Course completions</div>
<div style="position:absolute;left:491px;top:1163px;width:819px;height:120px;border:1.5px solid #c9cdd1;border-radius:6px;box-sizing:border-box;background:#fff"></div>
<div class="t" style="left:518px;top:1202.2px;font-size:21px;line-height:21px;font-weight:700;color:#161616;font-style:normal;">Users</div>
<svg style="position:absolute;left:589px;top:1203px;" width="13" height="19" viewBox="0 0 13 19"><path d="M2.5 2 L10.5 9.5 L2.5 17" fill="none" stroke="#161616" stroke-width="2.4" stroke-linecap="round" stroke-linejoin="round"/></svg>
<div class="t" style="right:1015px;top:1201.5px;font-size:23px;line-height:23px;font-weight:400;color:#161616;font-style:normal;letter-spacing:0.9px;-webkit-text-stroke:0.75px #161616">581</div>
<div style="position:absolute;left:2299px;top:88px;width:1.5px;height:1171px;background:#efefef"></div>
<div style="position:absolute;left:351px;top:626px;width:349px;height:463px;background:#fff;border-radius:10px;box-shadow:0 2px 10px rgba(0,0,0,0.16)"></div>
<div style="position:absolute;left:372px;top:899px;width:306px;height:43px;background:#bee0fc;border-radius:7px"></div>
<svg style="position:absolute;left:381px;top:655px;" width="25" height="25" viewBox="0 0 24 24"><g fill="none" stroke="#1a1a1a" color="#1a1a1a" stroke-width="1.9" stroke-linecap="round" stroke-linejoin="round"><circle cx="11" cy="7.3" r="4.4"/><path d="M12 21.5 H3.6 c-0.8 0 -1.3 -0.6 -1.2 -1.3 C3 16.6 6.4 14.6 11 14.6 c1.4 0 2.6 0.2 3.6 0.6"/><circle cx="19.6" cy="17.8" r="5.6" fill="#fff" stroke="none"/><path d="M18.6 14.6 A3.9 3.9 0 1 0 22.5 18.5 H18.6 Z" fill="currentColor" stroke="none"/><path d="M19.8 13.4 A3.4 3.4 0 0 1 23.2 16.8 H19.8 Z" fill="currentColor" stroke="none"/></g></svg>
<div class="t" style="left:426px;top:657.9px;font-size:19px;line-height:19px;font-weight:400;color:#222;font-style:normal;">Users</div>
<svg style="position:absolute;left:381px;top:697px;" width="25" height="25" viewBox="0 0 24 24"><g fill="none" stroke="#1a1a1a" color="#1a1a1a" stroke-width="1.9" stroke-linecap="round" stroke-linejoin="round"><path d="M12.5 21.5 H5 a2.5 2.5 0 0 1 -2.5 -2.5 V4.5 a2.5 2.5 0 0 1 2.5 -2.5 H16 a2.5 2.5 0 0 1 2.5 2.5 V12"/><path d="M2.5 17.3 H13"/><path d="M6.5 6.8 h8 M6.5 10 h8"/><circle cx="19.6" cy="17.8" r="5.6" fill="#fff" stroke="none"/><path d="M18.6 14.6 A3.9 3.9 0 1 0 22.5 18.5 H18.6 Z" fill="currentColor" stroke="none"/><path d="M19.8 13.4 A3.4 3.4 0 0 1 23.2 16.8 H19.8 Z" fill="currentColor" stroke="none"/></g></svg>
<div class="t" style="left:426px;top:699.9px;font-size:19px;line-height:19px;font-weight:400;color:#222;font-style:normal;">Courses</div>
<svg style="position:absolute;left:381px;top:739px;" width="25" height="25" viewBox="0 0 24 24"><g fill="none" stroke="#1a1a1a" color="#1a1a1a" stroke-width="1.9" stroke-linecap="round" stroke-linejoin="round"><path d="M14 10.5 H8.3 a3.2 3.2 0 0 0 0 6.4 H15.3 a2.9 2.9 0 0 1 0 5.8 H3.5"/><path d="M14 10.5 V3.5 L19.5 6 L14 8.5 Z" fill="currentColor"/></g></svg>
<div class="t" style="left:426px;top:741.9px;font-size:19px;line-height:19px;font-weight:400;color:#222;font-style:normal;">Learning paths</div>
<svg style="position:absolute;left:381px;top:781px;" width="25" height="25" viewBox="0 0 24 24"><g fill="none" stroke="#1a1a1a" color="#1a1a1a" stroke-width="1.9" stroke-linecap="round" stroke-linejoin="round"><path d="M2.5 7.5 L12 3 L21.5 7.5 L12 12 Z"/><path d="M2.5 12 L11 16.2"/><path d="M2.5 16.5 L10.5 20.5"/><circle cx="19.6" cy="17.8" r="5.6" fill="#fff" stroke="none"/><path d="M18.6 14.6 A3.9 3.9 0 1 0 22.5 18.5 H18.6 Z" fill="currentColor" stroke="none"/><path d="M19.8 13.4 A3.4 3.4 0 0 1 23.2 16.8 H19.8 Z" fill="currentColor" stroke="none"/></g></svg>
<div class="t" style="left:426px;top:783.9px;font-size:19px;line-height:19px;font-weight:400;color:#222;font-style:normal;">Branches</div>
<svg style="position:absolute;left:381px;top:823px;" width="25" height="25" viewBox="0 0 24 24"><g fill="none" stroke="#1a1a1a" color="#1a1a1a" stroke-width="1.9" stroke-linecap="round" stroke-linejoin="round"><circle cx="12" cy="11" r="3"/><path d="M12.5 21.6 H5.5 c0.4 -3 2.6 -4.6 6.5 -4.6 c0.8 0 1.5 0.1 2.2 0.2"/><circle cx="4.4" cy="5" r="2.6" fill="currentColor" stroke="none"/><circle cx="19.6" cy="5" r="2.6" fill="currentColor" stroke="none"/><path d="M-1.2 14.3 C-1 11.6 1.3 10 4.3 10 C6 10 7.3 10.5 8.2 11.4 C7.9 12.3 8 13.4 8.3 14.3 Z" fill="currentColor" stroke="none"/><path d="M25.2 14.3 C25 11.6 22.7 10 19.7 10 C18 10 16.7 10.5 15.8 11.4 C16.1 12.3 16 13.4 15.7 14.3 Z" fill="currentColor" stroke="none"/><circle cx="19.6" cy="17.8" r="5.6" fill="#fff" stroke="none"/><path d="M18.6 14.6 A3.9 3.9 0 1 0 22.5 18.5 H18.6 Z" fill="currentColor" stroke="none"/><path d="M19.8 13.4 A3.4 3.4 0 0 1 23.2 16.8 H19.8 Z" fill="currentColor" stroke="none"/></g></svg>
<div class="t" style="left:426px;top:825.9px;font-size:19px;line-height:19px;font-weight:400;color:#222;font-style:normal;">Groups</div>
<svg style="position:absolute;left:381px;top:865px;" width="25" height="25" viewBox="0 0 24 24"><g fill="none" stroke="#1a1a1a" color="#1a1a1a" stroke-width="1.9" stroke-linecap="round" stroke-linejoin="round"><path d="M5.5 21.5 V17.5 C3 15.8 2.2 13 2.2 10 C2.2 5.5 5.8 2.2 10.5 2.2 C15.5 2.2 19 5.8 19 10 L21.2 13.5 C21.4 14 21 14.5 20.5 14.5 H19 V17 a2.5 2.5 0 0 1 -2.5 2.5 H14 V21.5"/><circle cx="9.8" cy="9" r="3.6" fill="currentColor" stroke="none"/><path d="M13.18 9.38 L14.50 9.96 L13.80 11.65 L12.46 11.12 L11.92 11.66 L12.45 13.00 L10.76 13.70 L10.18 12.38 L9.42 12.38 L8.84 13.70 L7.15 13.00 L7.68 11.66 L7.14 11.12 L5.80 11.65 L5.10 9.96 L6.42 9.38 L6.42 8.62 L5.10 8.04 L5.80 6.35 L7.14 6.88 L7.68 6.34 L7.15 5.00 L8.84 4.30 L9.42 5.62 L10.18 5.62 L10.76 4.30 L12.45 5.00 L11.92 6.34 L12.46 6.88 L13.80 6.35 L14.50 8.04 L13.18 8.62 Z" fill="currentColor" stroke="currentColor" stroke-width="0.6"/><circle cx="9.8" cy="9" r="1.4" fill="#fff" stroke="none"/></g></svg>
<div class="t" style="left:426px;top:867.9px;font-size:19px;line-height:19px;font-weight:400;color:#222;font-style:normal;">Learning activities</div>
<svg style="position:absolute;left:381px;top:907px;" width="25" height="25" viewBox="0 0 24 24"><g fill="none" stroke="#1a1a1a" color="#1a1a1a" stroke-width="1.9" stroke-linecap="round" stroke-linejoin="round"><path d="M3.2 4.5 V18 a2.5 2.5 0 0 0 2.5 2.5 H23"/><circle cx="9.8" cy="8" r="1.1" fill="currentColor" stroke="none"/><circle cx="19" cy="7.2" r="1.1" fill="currentColor" stroke="none"/><circle cx="14" cy="12" r="1.1" fill="currentColor" stroke="none"/><circle cx="9" cy="15.5" r="1.1" fill="currentColor" stroke="none"/><circle cx="18.2" cy="15.5" r="1.1" fill="currentColor" stroke="none"/></g></svg>
<div class="t" style="left:426px;top:909.9px;font-size:19px;line-height:19px;font-weight:400;color:#222;font-style:normal;">Training matrix</div>
<svg style="position:absolute;left:381px;top:950px;" width="25" height="25" viewBox="0 0 24 24"><g fill="none" stroke="#1a1a1a" color="#1a1a1a" stroke-width="1.9" stroke-linecap="round" stroke-linejoin="round"><circle cx="5" cy="5" r="2.5"/><circle cx="19" cy="5" r="2.5"/><circle cx="12" cy="19.5" r="2.5"/><path d="M1 11 h22 M5 7.5 V11 M19 7.5 V11 M12 11 V17"/></g></svg>
<div class="t" style="left:426px;top:952.9px;font-size:19px;line-height:19px;font-weight:400;color:#222;font-style:normal;">Timeline</div>
<svg style="position:absolute;left:381px;top:992px;" width="25" height="25" viewBox="0 0 24 24"><g fill="none" stroke="#1a1a1a" color="#1a1a1a" stroke-width="1.9" stroke-linecap="round" stroke-linejoin="round"><path d="M15.5 20.5 H6.5 a2.5 2.5 0 0 1 -2.5 -2.5 V7 a2.5 2.5 0 0 1 2.5 -2.5 H19 a2.5 2.5 0 0 1 2.5 2.5 V14.5 Z"/><path d="M15.5 20.5 L21.5 14.5 H17.5 a2 2 0 0 0 -2 2 Z" fill="currentColor"/><path d="M7.6 8.5 v0.3 M7.6 11.5 v0.3 M7.6 14.5 v0.3" stroke-width="1.6"/></g></svg>
<div class="t" style="left:426px;top:994.9px;font-size:19px;line-height:19px;font-weight:400;color:#222;font-style:normal;">Custom</div>
<svg style="position:absolute;left:381px;top:1034px;" width="25" height="25" viewBox="0 0 24 24"><g fill="none" stroke="#1a1a1a" color="#1a1a1a" stroke-width="1.9" stroke-linecap="round" stroke-linejoin="round"><path d="M3.2 3.5 V18 a2.5 2.5 0 0 0 2.5 2.5 H23"/><path d="M7.3 12.7 L10.5 9.5 L13.5 12 L20.5 5.5"/><path d="M17 5 h4 v4"/><path d="M22.5 13.8 V19 H17.3 Z" fill="currentColor" stroke="none"/></g></svg>
<div class="t" style="left:426px;top:1036.9px;font-size:19px;line-height:19px;font-weight:400;color:#222;font-style:normal;">Analytics</div>
<svg style="position:absolute;left:570px;top:915px;" width="100" height="115" viewBox="0 0 100 115"><path d="M6 6.7 L68 35 A38.7 38.7 0 1 1 14 74 Z" fill="#0aa5ec"/><path d="M52.8 86.8 V59.5 L44 62.6 V57.8 L57.3 52.3 V86.8 Z" fill="#fff"/></svg>
</div></div>
</body></html>
